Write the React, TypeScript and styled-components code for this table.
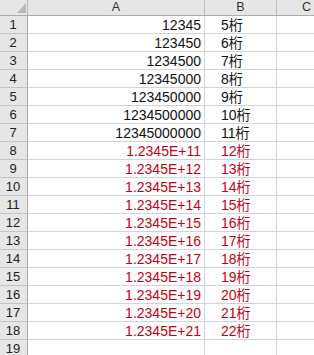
import React from "react";
import styled, { createGlobalStyle } from "styled-components";

const GlobalStyle = createGlobalStyle`
    html, body {
        margin: 0;
        padding: 0;
        background: #ffffff;
        overflow: hidden;
    }
`;

type Row = { a: string; b: string; red: boolean };

const rows: Row[] = [];
for (let d = 5; d <= 22; d++) {
    const red = d >= 12;
    const a = red ? `1.2345E+${d - 1}` : "12345" + "0".repeat(d - 5);
    rows.push({ a, b: `${d}桁`, red });
}

const App = () => {
    return (
        <>
            <GlobalStyle />
            <Viewport>
                <Sheet>
                    <Corner>
                        <CornerMark viewBox="0 0 9 10">
                            <polygon points="9,0 9,10 0,10" />
                        </CornerMark>
                    </Corner>
                    <ColHeader>A</ColHeader>
                    <ColHeader>B</ColHeader>
                    <ColHeader $last>C</ColHeader>
                    {rows.map((row, index) => (
                        <React.Fragment key={index}>
                            <RowHeader>{index + 1}</RowHeader>
                            <Cell $align="right" $red={row.red}>
                                {row.a}
                            </Cell>
                            <Cell $align="left" $red={row.red}>
                                {row.b}
                            </Cell>
                            <Cell $align="left" />
                        </React.Fragment>
                    ))}
                    <RowHeader>19</RowHeader>
                    <Cell $align="left" />
                    <Cell $align="left" />
                    <Cell $align="left" />
                </Sheet>
            </Viewport>
        </>
    );
};

export default App;

const Viewport = styled.div`
    width: 100vw;
    height: 100vh;
    overflow: hidden;
`;

const Sheet = styled.div`
    display: grid;
    grid-template-columns: 28px 177px 72px 60px;
    grid-template-rows: 16px;
    grid-auto-rows: 18px;
    width: 337px;
    font-family: "Liberation Sans", "Noto Sans CJK JP", sans-serif;
`;

const Corner = styled.div`
    box-sizing: border-box;
    background: #e6e6e6;
    border-right: 1px solid #b8b8b8;
    border-bottom: 1px solid #ababab;
    display: flex;
    justify-content: flex-end;
    align-items: flex-end;
    padding: 0 1px 2px 0;
`;

const CornerMark = styled.svg`
    width: 9px;
    height: 10px;
    fill: #b9b9b9;
`;

const ColHeader = styled.div<{ $last?: boolean }>`
    box-sizing: border-box;
    background: #e6e6e6;
    border-right: 1px solid ${(p) => (p.$last ? "transparent" : "#bcbcbc")};
    border-bottom: 1px solid #ababab;
    color: #333333;
    font-size: 12.5px;
    line-height: 15px;
    text-align: center;
`;

const RowHeader = styled.div`
    box-sizing: border-box;
    background: #e6e6e6;
    border-right: 1px solid #ababab;
    border-bottom: 1px solid #c4c4c4;
    color: #222222;
    font-size: 13px;
    line-height: 18px;
    text-align: center;
    padding-right: 1px;
`;

const Cell = styled.div<{ $align: "left" | "right"; $red?: boolean }>`
    box-sizing: border-box;
    border-right: 1px solid #d4d4d4;
    border-bottom: 1px solid #d4d4d4;
    color: ${(p) => (p.$red ? "#c40018" : "#111111")};
    font-size: 14px;
    line-height: 18px;
    white-space: nowrap;
    overflow: hidden;
    text-align: ${(p) => p.$align};
    padding: ${(p) => (p.$align === "right" ? "0 3px 0 0" : "0 0 0 16px")};
`;
